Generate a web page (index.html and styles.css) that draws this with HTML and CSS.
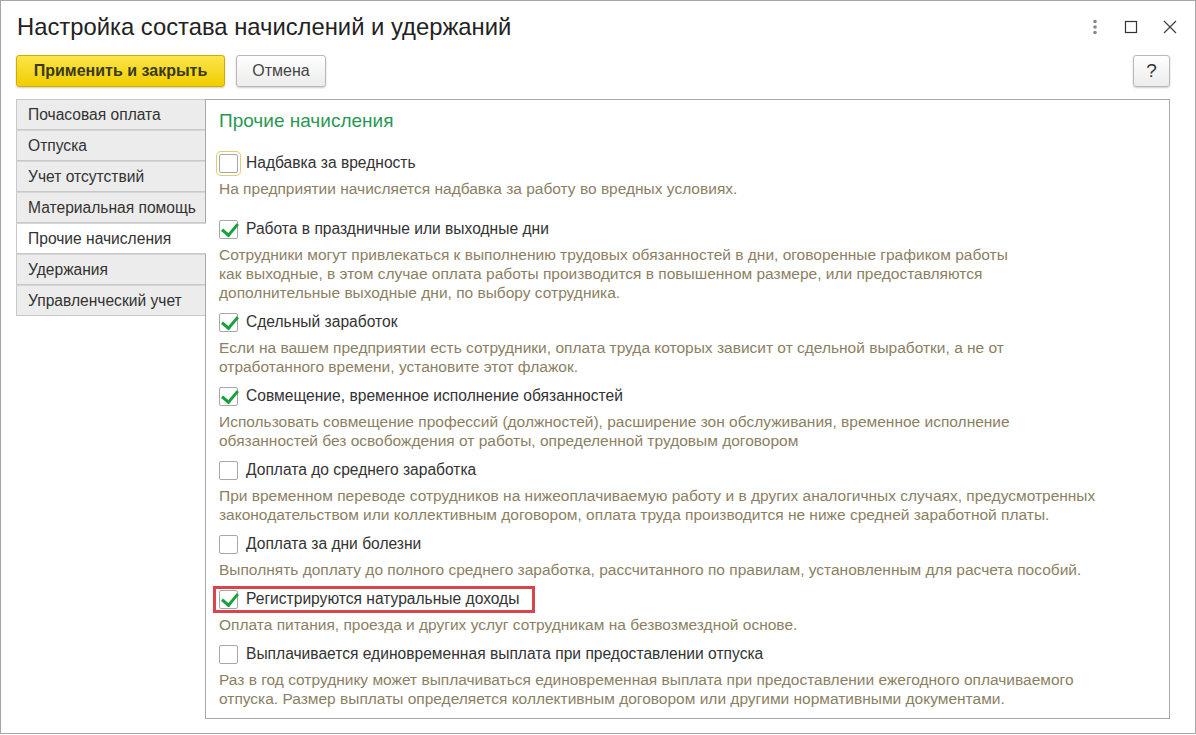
FILE: index.html
```html
<!DOCTYPE html>
<html lang="ru">
<head>
    <meta charset="UTF-8">
    <title>Настройка состава начислений и удержаний</title>
    <link rel="stylesheet" href="styles.css">
</head>
<body>
    <main class="window">
        <header class="titlebar">
            <h1>Настройка состава начислений и удержаний</h1>
            <div class="win-tools">
                <svg width="8" height="16" viewBox="0 0 8 16"><circle cx="4" cy="2.5" r="1.8" fill="#888"/><circle cx="4" cy="8" r="1.8" fill="#888"/><circle cx="4" cy="13.5" r="1.8" fill="#888"/></svg>
                <svg width="14" height="14" viewBox="0 0 14 14"><rect x="1.5" y="1.5" width="11" height="11" fill="none" stroke="#333" stroke-width="1.2"/></svg>
                <svg width="14" height="14" viewBox="0 0 14 14"><path d="M1 1L13 13M13 1L1 13" stroke="#444" stroke-width="1.3"/></svg>
            </div>
        </header>

        <div class="toolbar">
            <button class="btn btn-primary">Применить и закрыть</button>
            <button class="btn btn-cancel">Отмена</button>
            <button class="btn btn-help">?</button>
        </div>

        <div class="body">
            <nav class="tabs">
                <div class="tab">Почасовая оплата</div>
                <div class="tab">Отпуска</div>
                <div class="tab">Учет отсутствий</div>
                <div class="tab">Материальная помощь</div>
                <div class="tab active">Прочие начисления</div>
                <div class="tab">Удержания</div>
                <div class="tab">Управленческий учет</div>
            </nav>

            <section class="panel">
                <h2>Прочие начисления</h2>

                <div class="item first">
                    <div class="row"><span class="cb focus"></span>Надбавка за вредность</div>
                    <p class="desc">На предприятии начисляется надбавка за работу во вредных условиях.</p>
                </div>

                <div class="item">
                    <div class="row"><span class="cb on"></span>Работа в праздничные или выходные дни</div>
                    <p class="desc">Сотрудники могут привлекаться к выполнению трудовых обязанностей в дни, оговоренные графиком работы<br>как выходные, в этом случае оплата работы производится в повышенном размере, или предоставляются<br>дополнительные выходные дни, по выбору сотрудника.</p>
                </div>

                <div class="item">
                    <div class="row"><span class="cb on"></span>Сдельный заработок</div>
                    <p class="desc">Если на вашем предприятии есть сотрудники, оплата труда которых зависит от сдельной выработки, а не от<br>отработанного времени, установите этот флажок.</p>
                </div>

                <div class="item">
                    <div class="row"><span class="cb on"></span>Совмещение, временное исполнение обязанностей</div>
                    <p class="desc">Использовать совмещение профессий (должностей), расширение зон обслуживания, временное исполнение<br>обязанностей без освобождения от работы, определенной трудовым договором</p>
                </div>

                <div class="item">
                    <div class="row"><span class="cb"></span>Доплата до среднего заработка</div>
                    <p class="desc">При временном переводе сотрудников на нижеоплачиваемую работу и в других аналогичных случаях, предусмотренных<br>законодательством или коллективным договором, оплата труда производится не ниже средней заработной платы.</p>
                </div>

                <div class="item">
                    <div class="row"><span class="cb"></span>Доплата за дни болезни</div>
                    <p class="desc">Выполнять доплату до полного среднего заработка, рассчитанного по правилам, установленным для расчета пособий.</p>
                </div>

                <div class="item">
                    <div class="row hl"><span class="cb on"></span>Регистрируются натуральные доходы</div>
                    <p class="desc">Оплата питания, проезда и других услуг сотрудникам на безвозмездной основе.</p>
                </div>

                <div class="item">
                    <div class="row"><span class="cb"></span>Выплачивается единовременная выплата при предоставлении отпуска</div>
                    <p class="desc">Раз в год сотруднику может выплачиваться единовременная выплата при предоставлении ежегодного оплачиваемого<br>отпуска. Размер выплаты определяется коллективным договором или другими нормативными документами.</p>
                </div>
            </section>
        </div>
    </main>
</body>
</html>
```

FILE: styles.css
```css
* {
    box-sizing: border-box;
}
body {
    margin: 0;
    padding: 0;
    background: #fff;
    font-family: "Liberation Sans", Arial, sans-serif;
    color: #333;
}
.window {
    width: 1196px;
    height: 734px;
    border: 1px solid #a6a6a6;
    padding: 0 25px 0 15px;
}
.titlebar {
    display: flex;
    align-items: center;
    justify-content: space-between;
    height: 53px;
    padding-bottom: 1px;
}
h1 {
    margin: 0 0 0 1px;
    font-size: 23.8px;
    font-weight: normal;
    color: #222;
}
.win-tools {
    display: flex;
    align-items: center;
    gap: 25px;
    margin-right: -7px;
}
.toolbar {
    display: flex;
    align-items: center;
    gap: 11px;
    height: 33px;
}
.btn {
    font-family: inherit;
    font-size: 16px;
    height: 32px;
    padding: 0 15px;
    background: linear-gradient(#ffffff, #ececec);
    border: 1px solid #b8b8b8;
    border-radius: 3px;
    box-shadow: 0 1px 2px rgba(0, 0, 0, 0.2);
    color: #444;
}
.btn-primary {
    width: 209px;
    padding: 0;
    background: linear-gradient(#fbe54a, #f2cd00);
    border-color: #cfae00;
    color: #3a3a1a;
    font-weight: bold;
}
.btn-cancel {
    width: 90px;
    padding: 0;
}
.btn-help {
    margin-left: auto;
    width: 37px;
    padding: 0;
    font-size: 19px;
    color: #333;
}
.body {
    display: flex;
    margin-top: 12px;
}
.tabs {
    width: 189px;
}
.tab {
    height: 31px;
    line-height: 29px;
    padding-left: 11px;
    font-size: 15.6px;
    color: #333;
    background: #ececec;
    border: 1px solid #c8c8c8;
    border-right: none;
}
.tab + .tab {
    border-top: 1px solid #d6d6d6;
}
.tab.active {
    background: #fff;
    position: relative;
    margin-right: -1px;
    z-index: 1;
}
.panel {
    flex: 1;
    height: 620px;
    border: 1px solid #a8a8a8;
    padding: 10px 13px 0;
}
h2 {
    margin: 0 0 18px;
    font-size: 19px;
    line-height: 22px;
    font-weight: normal;
    color: #2a9855;
}
.item {
    margin-bottom: 7px;
}
.item.first {
    margin-bottom: 18px;
}
.row {
    display: flex;
    align-items: center;
    gap: 8px;
    width: fit-content;
    height: 26px;
    font-size: 15.6px;
    color: #333;
    position: relative;
}
.row.hl::after {
    content: "";
    position: absolute;
    top: 0;
    bottom: -1px;
    left: -6px;
    right: -16px;
    border: 3px solid #d9454a;
}
.cb {
    width: 19px;
    height: 19px;
    border: 1px solid #a8a8a8;
    border-radius: 2px;
    background: #fff;
    position: relative;
    flex: none;
}
.cb.focus {
    box-shadow: 0 0 0 2px #fff, 0 0 0 3px #e2cf6a;
}
.cb.on::after {
    content: "";
    position: absolute;
    left: 5px;
    top: -1px;
    width: 7px;
    height: 13px;
    border: solid #17a03c;
    border-width: 0 3px 3px 0;
    transform: rotate(40deg);
}
.desc {
    margin: 3px 0 0;
    font-size: 15.5px;
    line-height: 19px;
    color: #8b7f63;
}
```
